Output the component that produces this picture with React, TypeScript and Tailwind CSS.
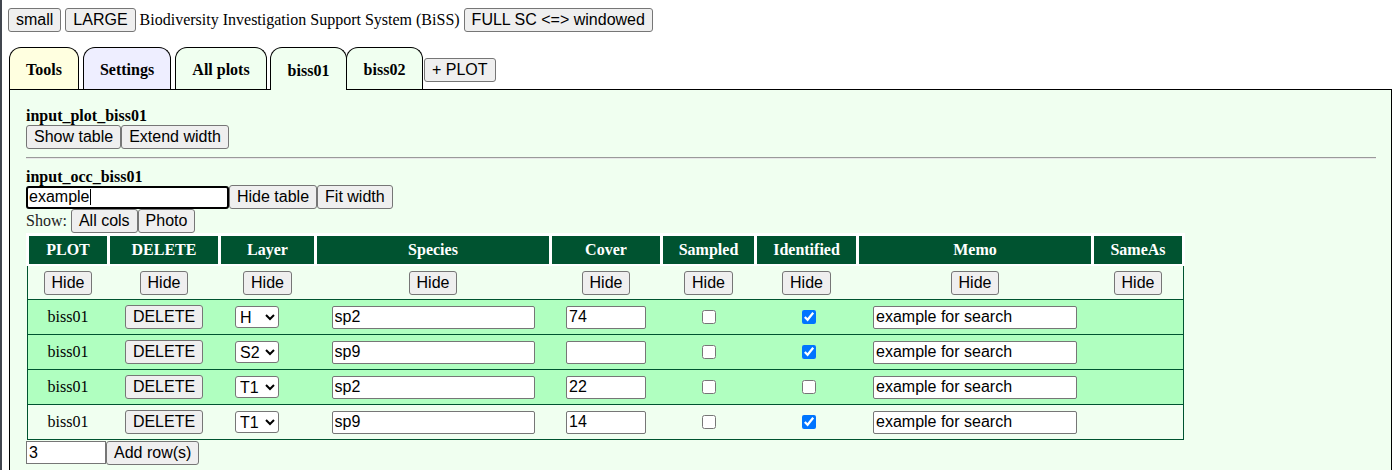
import React from 'react';

const serif = "font-['Liberation_Serif','Times_New_Roman',serif]";
const sans = "font-['Liberation_Sans',Arial,sans-serif]";

const btn =
  "h-[24px] px-[7px] bg-[#efefef] border border-[#767676] rounded-[3px] text-[16px] leading-none text-black whitespace-nowrap " +
  sans;
const field =
  "h-[23px] px-[2px] bg-white border border-[#767676] rounded-[2px] text-[16px] text-black outline-none " + sans;

// column widths of the occurrence table, header and body share them
const colW = [
  'w-[78px]',
  'w-[108px]',
  'w-[93px]',
  'w-[232px]',
  'w-[108px]',
  'w-[91px]',
  'w-[99px]',
  'w-[232px]',
  'w-[88px]',
];
const headers = ['PLOT', 'DELETE', 'Layer', 'Species', 'Cover', 'Sampled', 'Identified', 'Memo', 'SameAs'];

interface OccRow {
  layer: string;
  species: string;
  cover: string;
  sampled: boolean;
  identified: boolean;
  hit: boolean;
}

const rows: OccRow[] = [
  { layer: 'H', species: 'sp2', cover: '74', sampled: false, identified: true, hit: true },
  { layer: 'S2', species: 'sp9', cover: '', sampled: false, identified: true, hit: true },
  { layer: 'T1', species: 'sp2', cover: '22', sampled: false, identified: false, hit: true },
  { layer: 'T1', species: 'sp9', cover: '14', sampled: false, identified: true, hit: false },
];

const Tab: React.FC<{ label: string; w: string; bg: string; active?: boolean; extra?: string }> = ({
  label,
  w,
  bg,
  active,
  extra = '',
}) => (
  <div
    className={`${w} ${bg} ${extra} ${
      active ? 'h-[43px] mb-[-1px] relative z-10' : 'h-[42px]'
    } border border-b-0 border-black rounded-t-[12px] flex items-center justify-center pt-[3px] text-[16px] font-bold text-black ${serif}`}
  >
    {label}
  </div>
);

const Cell: React.FC<{ i: number; children?: React.ReactNode; className?: string }> = ({ i, children, className = '' }) => (
  <div className={`${colW[i]} shrink-0 flex items-center justify-center ${className}`}>{children}</div>
);

export default function App() {
  return (
    <div className={`min-h-[470px] bg-white border-l-2 border-[#41464f] pl-[6px] pr-[8px] pt-[8px] ${serif}`}>
      {/* top bar */}
      <div className="flex items-center gap-1">
        <button className={btn}>small</button>
        <button className={btn}>LARGE</button>
        <span className="text-[16px] text-black">Biodiversity Investigation Support System (BiSS)</span>
        <button className={btn}>FULL SC &lt;=&gt; windowed</button>
      </div>

      {/* tabs */}
      <div className="mt-[15px] ml-[1px] flex items-end">
        <Tab label="Tools" w="w-[70px]" bg="bg-[#ffffe0]" />
        <Tab label="Settings" w="w-[88px]" bg="bg-[#eeeeff]" extra="ml-[4px]" />
        <Tab label="All plots" w="w-[92px]" bg="bg-[#f0fff0]" extra="ml-[4px]" />
        <Tab label="biss01" w="w-[77px]" bg="bg-[#f0fff0]" extra="ml-[3px]" active />
        <Tab label="biss02" w="w-[77px]" bg="bg-[#f0fff0]" extra="ml-[-1px]" />
        <button className={`${btn} ml-[1px] mb-[7px]`}>+ PLOT</button>
      </div>

      {/* plot panel */}
      <div className="ml-[1px] border border-black bg-[#f0fff0] pl-4 pr-[15px] pt-[17px] pb-[20px]">
        <div className="text-[16px] leading-[17px] font-bold text-black">input_plot_biss01</div>
        <div className="mt-[1px] flex">
          <button className={btn}>Show table</button>
          <button className={btn}>Extend width</button>
        </div>

        <div className="mt-[8px] border-t border-b border-t-[#9a9a9a] border-b-[#e8e8e8]" />

        <div className="mt-[9px] text-[16px] leading-[17px] font-bold text-black">input_occ_biss01</div>
        <div className="flex items-start h-[24px]">
          <div className="relative">
            <input
              defaultValue="example"
              className={`w-[203px] h-[23px] px-[1px] bg-white border-2 border-black rounded-[3px] text-[16px] text-black outline-none ${sans}`}
            />
            <span className="absolute left-[64px] top-[4px] w-px h-[16px] bg-black" />
          </div>
          <button className={btn}>Hide table</button>
          <button className={btn}>Fit width</button>
        </div>
        <div className="flex items-center h-[24px] gap-1">
          <span className="text-[16px] text-[#222]">Show:</span>
          <div className="flex">
            <button className={btn}>All cols</button>
            <button className={btn}>Photo</button>
          </div>
        </div>

        {/* occurrence table */}
        <div className="w-[1159px] bg-white pl-[3px] pt-[3px] pb-[2px] flex gap-[3px]">
          {headers.map((h, i) => (
            <Cell key={h} i={i} className="h-[28px] bg-[#005330] text-white text-[16px] font-bold">
              {h}
            </Cell>
          ))}
        </div>
        <div className="ml-[1px] w-[1157px] border-l border-r border-[#005330]">
          <div className="h-[34px] border-b border-[#005330] pl-[1px] flex gap-[3px]">
            {headers.map((h, i) => (
              <Cell key={h} i={i}>
                <button className={btn}>Hide</button>
              </Cell>
            ))}
          </div>
          {rows.map((r, k) => (
            <div
              key={k}
              className={`h-[35px] border-b border-[#005330] pl-[1px] flex gap-[3px] ${r.hit ? 'bg-[#b0ffc0]' : ''}`}
            >
              <Cell i={0} className="text-[16px] text-black">
                biss01
              </Cell>
              <Cell i={1}>
                <button className={btn}>DELETE</button>
              </Cell>
              <Cell i={2} className="!justify-start pl-[14px]">
                <select
                  defaultValue={r.layer}
                  className={`w-[44px] h-[22px] bg-white border border-[#767676] rounded-[3px] text-[16px] text-black ${sans}`}
                >
                  <option>H</option>
                  <option>S1</option>
                  <option>S2</option>
                  <option>T1</option>
                  <option>T2</option>
                </select>
              </Cell>
              <Cell i={3}>
                <input defaultValue={r.species} className={`${field} w-[203px]`} />
              </Cell>
              <Cell i={4}>
                <input defaultValue={r.cover} className={`${field} w-[80px]`} />
              </Cell>
              <Cell i={5}>
                <input type="checkbox" defaultChecked={r.sampled} className="w-[14px] h-[14px]" />
              </Cell>
              <Cell i={6}>
                <input type="checkbox" defaultChecked={r.identified} className="w-[14px] h-[14px] ml-[4px]" />
              </Cell>
              <Cell i={7}>
                <input defaultValue="example for search" className={`${field} w-[204px]`} />
              </Cell>
              <Cell i={8} />
            </div>
          ))}
        </div>
        <div className="mt-[1px] flex">
          <input defaultValue="3" className={`${field} w-[80px] h-[22px] rounded-none`} />
          <button className={`${btn} h-[22px]`}>Add row(s)</button>
        </div>
      </div>
    </div>
  );
}
